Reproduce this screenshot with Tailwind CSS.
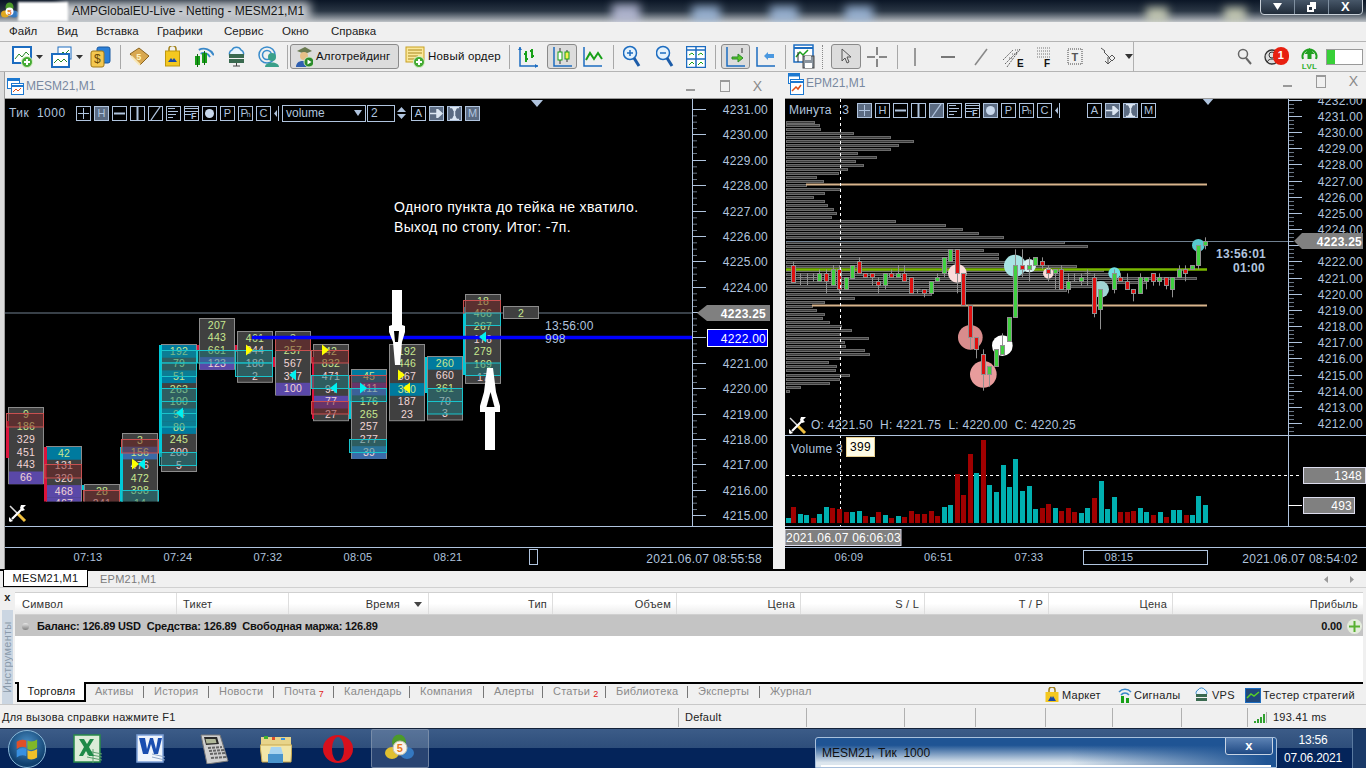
<!DOCTYPE html>
<html lang="en">

<head>
    <meta charset="UTF-8">
    <title>AMPGlobalEU-Live - Netting - MESM21,M1</title>
    <script src="https://cdn.jsdelivr.net/npm/@tailwindcss/browser@4"></script>
</head>

<body class="w-[1366px] h-[768px] overflow-hidden flex flex-col bg-[#f0f0f0] text-[11px] tracking-[0.25px] text-black font-['Liberation_Sans',sans-serif]">

    <!-- Title bar -->
    <div class="relative h-[22px] shrink-0 overflow-hidden bg-gradient-to-b from-[#0b1626] via-[#2a3644] to-[#c0c4c8]">
        <div class="absolute left-[60px] top-[2px] w-[250px] h-[20px] bg-[#c8ccd0] blur-[5px]"></div>
        <div class="absolute left-[612px] top-[4px] w-[28px] h-[18px] bg-[#c8cce8]/80 blur-[5px]"></div>
        <div class="absolute left-[692px] top-[6px] w-[28px] h-[16px] bg-[#a8c4e8]/80 blur-[5px]"></div>
        <div class="absolute left-[770px] top-[6px] w-[28px] h-[16px] bg-[#a8c4e8]/80 blur-[5px]"></div>
        <div class="absolute left-[845px] top-[6px] w-[28px] h-[16px] bg-[#a8c4e8]/80 blur-[5px]"></div>
        <div class="absolute left-[1146px] top-[7px] w-[22px] h-[15px] bg-[#d8dcc0]/80 blur-[4px]"></div>
        <div class="absolute left-[1224px] top-[7px] w-[22px] h-[15px] bg-[#d8dcc0]/80 blur-[4px]"></div>
        <div class="relative flex items-center h-full pl-[1px]">
            <svg width="17" height="18" viewBox="0 0 17 18">
                <ellipse cx="8.500" cy="5" rx="4" ry="4.500" fill="#4c9a2a" />
                <ellipse cx="4" cy="12" rx="4" ry="3.500" fill="#e0a820" />
                <ellipse cx="13" cy="12" rx="4" ry="3.500" fill="#3478c0" />
                <circle cx="8.500" cy="9.500" r="4" fill="#fff" />
                <text x="8.500" y="12.500" font-size="8" font-weight="700" fill="#e87818" text-anchor="middle">5</text>
            </svg>
            <div class="w-[50px] h-[19px] bg-white blur-[1px]"></div>
            <span class="ml-[4px] text-[12px] tracking-[0px] text-[#161616]">AMPGlobalEU-Live - Netting - MESM21,M1</span>
        </div>
        <div class="absolute left-[1260px] top-[-2px] w-[103px] h-[17px] rounded-b-[4px] border border-[#c8d0d8] bg-gradient-to-b from-[#4a5a6c] to-[#202c3a] flex text-white">
            <span class="w-[34px] flex items-center justify-center border-r border-[#8090a0]"><svg width="9" height="7"><path d="M0 0h9L4.500 7z" fill="#fff" /></svg></span>
            <span class="w-[34px] flex items-center justify-center border-r border-[#8090a0]"><svg width="9" height="10"><path d="M3 0h6v7H7v3H0V3h3z" fill="#fff" /><path d="M2 5h3v3H2z" fill="#2a3644" /></svg></span>
            <span class="flex-1 flex items-center justify-center text-[13px] font-bold leading-none">X</span>
        </div>
    </div>

    <!-- Menu -->
    <div class="h-[19px] shrink-0 flex items-center pl-[9px] text-[11.500px] tracking-[0px] text-[#222]">
        <span class="w-[48px]">Файл</span><span class="w-[39px]">Вид</span><span class="w-[61px]">Вставка</span><span class="w-[67px]">Графики</span><span class="w-[58px]">Сервис</span><span class="w-[49px]">Окно</span><span>Справка</span>
    </div>

    <!-- Toolbar -->
    <div id="toolbar" class="relative h-[31px] shrink-0 border-y border-[#b4b4b4] bg-[#f0f0f0] flex items-center">
        <div class="ml-[12px] w-[21px] h-[22px]"><svg width="21" height="22"><rect x="1" y="1" width="18" height="16" fill="#fff" stroke="#1c6cc0" stroke-width="2" /><path d="M3 13l4-5 3 3 4-5 3 3" fill="none" stroke="#2a8a2a" /><circle cx="15" cy="16" r="5.500" fill="#44aa33" stroke="#e0f0d0" /><path d="M12 16h6M15 13v6" stroke="#fff" stroke-width="2" /></svg></div>
        <svg class="ml-[3px]" width="7" height="4"><path d="M0 0h7L3.500 4z" fill="#333" /></svg>
        <div class="ml-[8px] w-[22px] h-[22px]"><svg width="22" height="22"><rect x="7" y="1" width="13" height="12" fill="#fff" stroke="#1c6cc0" /><path d="M9 9l3-3 2 2 4-4" fill="none" stroke="#2a8a2a" /><rect x="1" y="8" width="17" height="13" fill="#fff" stroke="#1c6cc0" stroke-width="2" /><path d="M3 17l4-4 3 3 3-3 3 3" fill="none" stroke="#2a8a2a" /></svg></div>
        <svg class="ml-[3px]" width="7" height="4"><path d="M0 0h7L3.500 4z" fill="#333" /></svg>
        <div class="ml-[7px] w-[21px] h-[22px]"><svg width="21" height="22"><rect x="7" y="1" width="13" height="16" rx="2" fill="#2c80d8" stroke="#1858a0" /><rect x="1" y="5" width="13" height="16" rx="2" fill="#f4c850" stroke="#a07818" /><text x="7.500" y="17" font-size="12" fill="#6a4a08" text-anchor="middle">$</text></svg></div>
        <div class="ml-[9px] w-[1px] h-[24px] bg-[#a8a8a8]"></div>
        <div class="ml-[8px] w-[21px] h-[20px]"><svg width="21" height="20"><path d="M1 7l9-6 10 8-9 9z" fill="#d8a850" stroke="#8a6420" /><path d="M2 9l9 9" stroke="#f8e8b8" stroke-width="2" /><text x="10" y="13" font-size="9" font-weight="700" fill="#fff4c0" text-anchor="middle">5</text></svg></div>
        <div class="ml-[15px] w-[14px] h-[22px]"><svg width="15" height="21"><path d="M4 6V3a3 3 0 0 1 7 0v3" fill="none" stroke="#a08018" stroke-width="1.500" /><rect x="0.500" y="5" width="14" height="15" fill="#f4c820" stroke="#c09810" /><path d="M3 16l3-4 1.500 2L9 12l3 4z" fill="#1848a8" /></svg></div>
        <div class="ml-[15px] w-[20px] h-[22px]"><svg width="20" height="21"><path d="M6 9a7 7 0 0 1 10 0M3 6a11 11 0 0 1 16 0" transform="rotate(20 10 10)" fill="none" stroke="#3a88c8" stroke-width="1.800" /><rect x="1" y="10" width="5" height="9" fill="#18a018" /><rect x="8" y="7" width="5" height="10" fill="#18a018" /><path d="M3.500 8v13M10.500 5v14" stroke="#106810" /></svg></div>
        <div class="ml-[12px] w-[20px] h-[22px]"><svg width="21" height="21"><path d="M5 11a4 4 0 0 1 1-7 5 5 0 0 1 9 0 4 4 0 0 1 1 7z" fill="#e8f4fc" stroke="#3a8ccc" stroke-width="1.500" /><rect x="3" y="8" width="15" height="4" fill="#3a6a50" /><rect x="3" y="13" width="15" height="4" fill="#3a6a50" /><path d="M10.500 17v3M7 20h7" stroke="#444" /></svg></div>
        <div class="ml-[12px] w-[20px] h-[22px]"><svg width="21" height="21"><circle cx="9" cy="9" r="8" fill="none" stroke="#3a8ccc" stroke-width="1.500" /><circle cx="9" cy="9" r="4.500" fill="none" stroke="#3a8ccc" stroke-width="1.500" /><circle cx="14" cy="11" r="4" fill="#3aa08a" /><path d="M7 21c0-6 14-6 14 0z" fill="#3aa08a" /></svg></div>
        <div class="ml-[9px] w-[1px] h-[24px] bg-[#a8a8a8]"></div>
        <div class="ml-[2px] w-[109px] h-[25px] rounded-[3px] border border-[#8a8a8a] bg-[#dcdcdc] flex items-center pl-[4px] gap-[3px]">
            <svg width="18" height="21"><path d="M2 5l8-4 7 4-7 3z" fill="#6a7a50" /><circle cx="9" cy="10" r="4" fill="#e8c088" /><path d="M1 21c0-8 12-8 14 0z" fill="#3060b0" /><circle cx="14" cy="16" r="5" fill="#2a8a2a" stroke="#d0e8c0" /><path d="M12.500 13.500v5l4-2.500z" fill="#fff" /></svg>
            <span class="text-[11.500px] tracking-[0.15px] text-[#111] whitespace-nowrap">Алготрейдинг</span>
        </div>
        <div class="ml-[6px] w-[20px] h-[22px]"><svg width="21" height="22"><rect x="1" y="1" width="18" height="15" fill="#fbe89a" stroke="#c8a020" /><path d="M3 4h14M3 7h14M3 10h10M3 13h8" stroke="#a88820" /><circle cx="14" cy="16" r="5.500" fill="#44aa33" stroke="#e0f0d0" /><path d="M11 16h6M14 13v6" stroke="#fff" stroke-width="2" /></svg></div>
        <span class="ml-[3px] w-[72px] text-[11.500px] tracking-[0.2px] text-[#111] whitespace-nowrap">Новый ордер</span>
        <div class="ml-[9px] w-[1px] h-[24px] bg-[#a8a8a8]"></div>
        <div class="ml-[8px] w-[21px] h-[22px]"><svg width="21" height="22"><path d="M2 1v19h18" fill="none" stroke="#1c6cc0" stroke-width="1.500" /><path d="M0 4l2-3 2 3M17 18l3 2-3 2" fill="#1c6cc0" /><path d="M8 5v11M6 8h2M8 13h2M14 3v9M12 5h2M14 10h2" stroke="#18a018" stroke-width="2" /></svg></div>
        <div class="ml-[8px] w-[30px] h-[25px] rounded-[3px] border border-[#8a8a8a] bg-[#dcdcdc] flex items-center justify-center"><svg width="21" height="22"><path d="M2 1v19h18" fill="none" stroke="#1c6cc0" stroke-width="1.500" /><path d="M8 2v16M15 4v12" stroke="#333" /><rect x="6" y="6" width="4" height="8" fill="#fff" stroke="#18a018" /><rect x="13" y="6" width="4" height="7" fill="#f6ee50" stroke="#18a018" /></svg></div>
        <div class="ml-[5px] w-[21px] h-[22px]"><svg width="21" height="22"><path d="M2 1v19h18" fill="none" stroke="#1c6cc0" stroke-width="1.500" /><path d="M4 14l4-7 4 6 4-6 4 6" fill="none" stroke="#18a018" stroke-width="2" /></svg></div>
        <div class="ml-[10px] w-[1px] h-[24px] bg-[#a8a8a8]"></div>
        <div class="ml-[9px] w-[18px] h-[23px]"><svg width="18" height="23"><circle cx="7" cy="8" r="6.500" fill="#e4f2fc" stroke="#1c6cc0" stroke-width="1.500" /><path d="M4 8h6M7 5v6" stroke="#1c6cc0" stroke-width="1.500" /><path d="M11 13l5 8" stroke="#1c5ca8" stroke-width="3" /></svg></div>
        <div class="ml-[15px] w-[18px] h-[23px]"><svg width="18" height="23"><circle cx="7" cy="8" r="6.500" fill="#e4f2fc" stroke="#1c6cc0" stroke-width="1.500" /><path d="M4 8h6" stroke="#1c6cc0" stroke-width="1.500" /><path d="M11 13l5 8" stroke="#1c5ca8" stroke-width="3" /></svg></div>
        <div class="ml-[12px] w-[20px] h-[22px]"><svg width="20" height="22"><rect x="0.500" y="0.500" width="19" height="21" fill="#fff" stroke="#1c6cc0" stroke-width="1.500" /><path d="M0 4h20M0 13h20M10 0v22" stroke="#1c6cc0" stroke-width="1.500" /><path d="M3 9l3-2 2 2M12 9l3-2 2 2M3 19l3-3 2 2M12 19l3-3 2 2" fill="none" stroke="#18a018" /></svg></div>
        <div class="ml-[9px] w-[1px] h-[24px] bg-[#a8a8a8]"></div>
        <div class="ml-[5px] w-[29px] h-[25px] rounded-[3px] border border-[#8a8a8a] bg-[#dcdcdc] flex items-center justify-center"><svg width="21" height="22"><path d="M2 1v19h18" fill="none" stroke="#1c6cc0" stroke-width="1.500" /><path d="M7 11h6V8l5 4-5 4v-3H7z" fill="#58c828" stroke="#2a8a2a" /><path d="M17 2v5" stroke="#333" /></svg></div>
        <div class="ml-[5px] w-[20px] h-[22px]"><svg width="21" height="22"><path d="M2 1v19h18" fill="none" stroke="#1c6cc0" stroke-width="1.500" /><path d="M13 8h6v4h-6v2l-4-4 4-4z" fill="#4a98e0" /></svg></div>
        <div class="ml-[10px] w-[1px] h-[24px] bg-[#a8a8a8]"></div>
        <div class="ml-[7px] w-[22px] h-[26px]"><svg width="22" height="25"><rect x="1" y="1" width="19" height="17" fill="#fff" stroke="#1c6cc0" stroke-width="1.500" /><path d="M1 4h19" stroke="#1c6cc0" stroke-width="2" /><path d="M3 13l4-5 3 3 5-5" fill="none" stroke="#18a018" stroke-width="1.500" /><path d="M5 8v10" stroke="#333" /><rect x="10" y="12" width="11" height="12" fill="#8a949e" stroke="#444" /><rect x="12" y="12" width="6" height="4" fill="#e8e8e8" /><rect x="12" y="19" width="7" height="5" fill="#fff" /></svg></div>
        <div class="ml-[7px] w-[1px] h-[24px] border-l border-dotted border-[#888]"></div>
        <div class="ml-[8px] w-[30px] h-[25px] rounded-[3px] border border-[#8a8a8a] bg-[#dcdcdc] flex items-center justify-center"><svg width="12" height="17"><path d="M2 1v12l3-3 2 5 2-1-2-5h4z" fill="#ddd" stroke="#555" /></svg></div>
        <div class="ml-[6px] w-[20px] h-[20px]"><svg width="20" height="20"><path d="M10 0v8M10 12v8M0 10h8M12 10h8" stroke="#666" stroke-width="1.500" /></svg></div>
        <div class="ml-[10px] w-[1px] h-[24px] bg-[#a8a8a8]"></div>
        <div class="ml-[16px] w-[2px] h-[18px] bg-[#999]"></div>
        <div class="ml-[25px] w-[14px] h-[2px] bg-[#777]"></div>
        <div class="ml-[19px] w-[14px] h-[18px]"><svg width="14" height="18"><path d="M1 17 13 1" stroke="#888" stroke-width="1.500" /></svg></div>
        <div class="ml-[15px] w-[23px] h-[22px]"><svg width="23" height="22"><path d="M0 14 10 4M2 18 14 6M4 21 17 3" stroke="#666" stroke-dasharray="2 1" /><path d="M12 4h6M9 8h5M6 12h4" stroke="#666" stroke-dasharray="1 1" /><text x="14" y="21" font-size="10" font-weight="700" fill="#111">E</text></svg></div>
        <div class="ml-[10px] w-[17px] h-[22px]"><svg width="17" height="22"><path d="M1 2h14M1 5h14M1 8h14M1 11h14" stroke="#777" stroke-dasharray="1 1" /><text x="8" y="21" font-size="10" font-weight="700" fill="#111">F</text></svg></div>
        <div class="ml-[14px] w-[17px] h-[20px]"><svg width="17" height="20"><rect x="1" y="2" width="14" height="15" fill="none" stroke="#444" stroke-dasharray="1 1" /><text x="8" y="14" font-size="11" font-weight="700" fill="#555" text-anchor="middle">T</text></svg></div>
        <div class="ml-[15px] w-[18px] h-[20px]"><svg width="18" height="20"><path d="M2 1l4 3-1 1 5 5M9 10v7M6 14l3 3 3-3M13 8l3 3-3 3-3-3z" fill="none" stroke="#555" /></svg></div>
        <svg class="ml-[8px]" width="8" height="5"><path d="M0 0h8L4 5z" fill="#333" /></svg>
        <div class="w-[1px] h-[30px] bg-[#b0b0b0]"></div>
        <div class="ml-[103px] w-[15px] h-[17px]"><svg width="15" height="17"><circle cx="6" cy="6" r="4.500" fill="none" stroke="#666" stroke-width="1.500" /><path d="M9 10l5 6" stroke="#666" stroke-width="2" /></svg></div>
        <div class="relative ml-[12px] w-[27px] h-[22px]"><svg width="27" height="22"><circle cx="8" cy="11" r="7" fill="#ddd" stroke="#333" stroke-width="1.300" /><circle cx="8" cy="9" r="3" fill="none" stroke="#333" /><path d="M3 16c2-4 8-4 10 0" fill="none" stroke="#333" /></svg><span class="absolute left-[9px] top-[1px] w-[16px] h-[18px] rounded-full bg-[#e82010] text-white text-[11px] font-bold flex items-center justify-center">1</span></div>
        <div class="ml-[9px] w-[19px] h-[26px]"><svg width="19" height="26"><path d="M3 15a7 7 0 1 1 13 0" fill="none" stroke="#20a020" stroke-width="2" /><path d="M9.500 4l5 6h-3v5h-4v-5h-3z" fill="#20a020" /><text x="9.500" y="25" font-size="8" font-weight="700" fill="#30b030" text-anchor="middle">LVL</text></svg></div>
        <div class="ml-[7px] w-[37px] h-[16px] border border-[#999] bg-white"><div class="w-[8px] h-full bg-[#38d038]"></div></div>
    </div>

    <!-- MDI area -->
    <div class="relative h-[497px] shrink-0 flex bg-[#f0f0f0]">
        <div class="w-[5px] shrink-0 bg-[#dcdcdc] border-r border-[#a0a0a0]"></div>
        <div class="w-[768px] shrink-0 flex flex-col">
            <div class="h-[26px] shrink-0 flex items-center pl-[2px] text-[12px] tracking-[0px] text-[#7888a0] pt-[2px]">
                <svg width="17" height="17"><rect x="0.500" y="0.500" width="12" height="10" fill="#fff" stroke="#1c78d0" /><path d="M0 2h12" stroke="#1c78d0" stroke-width="2" /><rect x="4.500" y="5.500" width="12" height="11" fill="#fff" stroke="#1c78d0" /><path d="M5 8h11" stroke="#1c78d0" stroke-width="2" /><path d="M6 14l3-3 2 2 3-3" fill="none" stroke="#e05018" /></svg>
                <span class="ml-[2px]">MESM21,M1</span>
                <div class="ml-auto flex items-center text-[#8a8a8a]">
                    <span class="w-[9px] h-[2px] bg-[#999] mt-[7px]"></span>
                    <span class="ml-[25px] w-[10px] h-[12px] border border-[#999] border-t-2"></span>
                    <span class="ml-[23px] mr-[11px] text-[14px] leading-none">X</span>
                </div>
            </div>
            <div class="relative flex-1 bg-black border-t border-[#9a9a9a] overflow-hidden">
                <svg id="leftChart" class="absolute left-0 top-0" width="768" height="467" viewBox="5 99 768 467"></svg>
                <div class="absolute left-[4px] top-[5px] flex items-center text-[#b0c4de] text-[12px] tracking-[0.5px]">
                    <span class="w-[67px] whitespace-pre">Тик  1000</span>
                    <div id="leftTools" class="flex gap-[3px] items-center tracking-[0px]"></div>
                </div>
            </div>
        </div>
        <div class="w-[12px] shrink-0"></div>
        <div class="flex-1 flex flex-col min-w-0">
            <div class="h-[26px] shrink-0 flex items-start pl-[3px] text-[12px] tracking-[0px] text-[#7888a0]">
                <svg class="mt-[1px]" width="17" height="23"><rect x="0.500" y="0.500" width="11" height="10" fill="#fff" stroke="#1c78d0" /><path d="M0 2h12" stroke="#1c78d0" stroke-width="3" /><rect x="2.500" y="6.500" width="13" height="15" fill="#fff" stroke="#1c78d0" /><path d="M3 9h12" stroke="#1c78d0" stroke-width="2" /><path d="M4 18l4-4 2 2 3-4" fill="none" stroke="#e05018" stroke-width="1.500" /></svg>
                <span class="ml-[1px] mt-[2px]">EPM21,M1</span>
                <div class="ml-auto flex items-center text-[#8a8a8a] mt-[2px]">
                    <span class="w-[9px] h-[2px] bg-[#999] mt-[9px]"></span>
                    <span class="ml-[24px] w-[10px] h-[13px] border border-[#999] border-t-2"></span>
                    <span class="ml-[23px] mr-[8px] text-[14px] leading-none">X</span>
                </div>
            </div>
            <div class="relative flex-1 bg-black border-t border-[#9a9a9a] overflow-hidden">
                <svg id="rightChart" class="absolute left-0 top-0" width="581" height="467" viewBox="785 99 581 467"></svg>
                <div class="absolute left-[4px] top-[2px] flex items-center text-[#b0c4de] text-[12px] tracking-[0.2px]">
                    <span class="w-[68px]">Минута&nbsp;&nbsp;&nbsp;3</span>
                    <div id="rightTools" class="flex gap-[3px] items-center tracking-[0px]"></div>
                </div>
                <div class="absolute left-[61px] top-[338px] w-[29px] h-[20px] border border-[#e8d090] bg-[#fffde8] text-black text-[12px] flex items-center justify-center">399</div>
            </div>
        </div>
    </div>

    <!-- Chart tabs -->
    <div class="h-[18px] shrink-0 flex items-end border-t-2 border-black pl-[3px]">
        <div class="w-[85px] h-[17px] bg-white border-x border-b border-black text-center leading-[16px] text-[#111]">MESM21,M1</div>
        <span class="ml-[12px] text-[#7a7a7a] leading-[16px]">EPM21,M1</span>
        <svg class="ml-auto mr-[12px] mb-[3px]" width="30" height="9"><path d="M4 1v7L0 4.500zM26 1v7l4-3.500z" fill="#999" /></svg>
    </div>

    <!-- Toolbox -->
    <div class="h-[117px] shrink-0 flex border-t border-[#d0d0d0] pt-[4px]">
        <div class="relative w-[15px] shrink-0 flex flex-col items-center">
            <span class="font-bold text-[11px] leading-[11px] text-[#222]">x</span>
            <div class="mt-[7px] w-[11px] h-[95px] bg-[#cbd6e2] flex items-center justify-center overflow-hidden">
                <span class="-rotate-90 whitespace-nowrap text-[#8a9aaa] text-[11px]">Инструменты</span>
            </div>
        </div>
        <div class="flex-1 flex flex-col min-w-0 mr-[3px]">
            <div class="h-[23px] shrink-0 flex bg-gradient-to-b from-white via-white to-[#ececec] border-y border-[#d0d0d0] text-[#333]">
                <span class="w-[162px] pl-[7px] pt-[1px] border-r border-[#dedede] flex items-center">Символ</span>
                <span class="w-[112px] pl-[6px] pt-[1px] border-r border-[#dedede] flex items-center">Тикет</span>
                <span class="w-[140px] pr-[6px] pt-[1px] border-r border-[#dedede] flex items-center justify-end">Время<svg class="ml-[14px]" width="8" height="5"><path d="M0 0h8L4 5z" fill="#444" /></svg></span>
                <span class="w-[124px] pr-[5px] pt-[1px] border-r border-[#dedede] flex items-center justify-end">Тип</span>
                <span class="w-[124px] pr-[5px] pt-[1px] border-r border-[#dedede] flex items-center justify-end">Объем</span>
                <span class="w-[124px] pr-[5px] pt-[1px] border-r border-[#dedede] flex items-center justify-end">Цена</span>
                <span class="w-[124px] pr-[5px] pt-[1px] border-r border-[#dedede] flex items-center justify-end">S / L</span>
                <span class="w-[124px] pr-[5px] pt-[1px] border-r border-[#dedede] flex items-center justify-end">T / P</span>
                <span class="w-[124px] pr-[5px] pt-[1px] border-r border-[#dedede] flex items-center justify-end">Цена</span>
                <span class="flex-1 pr-[5px] pt-[1px] flex items-center justify-end">Прибыль</span>
            </div>
            <div class="h-[21px] shrink-0 bg-[#c4c4c4] flex items-center pl-[7px] pt-[1px] font-bold tracking-[-0.15px] text-[#111]">
                <span class="w-[7px] h-[7px] rounded-full bg-gradient-to-b from-[#e8e8e8] to-[#808080]"></span>
                <span class="ml-[8px] whitespace-pre">Баланс: 126.89 USD  Средства: 126.89  Свободная маржа: 126.89</span>
                <span class="ml-auto">0.00</span>
                <span class="ml-[5px] mr-[1px] w-[15px] h-[15px] rounded-full bg-[#e4ecdc] flex items-center justify-center"><svg width="11" height="11"><path d="M5.500 0v11M0 5.500h11" stroke="#58b030" stroke-width="2" /></svg></span>
            </div>
            <div class="flex-1 bg-white border-b-2 border-black"></div>
            <div class="h-[20px] shrink-0 flex items-start text-[#8a8a8a] relative">
                <div class="w-[69px] h-[20px] -mt-[2px] bg-white border-x-2 border-b-2 border-black text-center text-[#111] leading-[19px] ml-[2px]">Торговля</div>
                <div id="bottomTabs" class="flex items-center h-[15px]"></div>
                <div class="absolute left-[1030px] top-[1px] flex items-center h-[20px] text-[#222]">
                    <svg width="14" height="16"><path d="M4 6V3a3 3 0 0 1 6 0v3" fill="none" stroke="#a08018" stroke-width="1.500" /><rect x="0.500" y="5" width="13" height="10" fill="#f4c820" /><path d="M3 14l3-5 1 2 1-2 3 5z" fill="#1848a8" /></svg>
                    <span class="ml-[3px] w-[41px]">Маркет</span>
                    <svg class="ml-[15px]" width="14" height="17"><path d="M3 8a5 5 0 0 1 8 0M1 5a8 8 0 0 1 12 0" fill="none" stroke="#3a88c8" stroke-width="1.500" /><rect x="3" y="9" width="3" height="7" fill="#18a018" /><rect x="8" y="11" width="3" height="5" fill="#18a018" /></svg>
                    <span class="ml-[2px] w-[46px]">Сигналы</span>
                    <svg class="ml-[13px]" width="17" height="16"><path d="M4 8a3 3 0 0 1 1-5 4 4 0 0 1 7 0 3 3 0 0 1 1 5z" fill="#e8f4fc" stroke="#3a8ccc" /><rect x="3" y="7" width="11" height="3" fill="#3a6a50" /><rect x="3" y="11" width="11" height="3" fill="#3a6a50" /></svg>
                    <span class="ml-[2px] w-[20px]">VPS</span>
                    <svg class="ml-[13px]" width="16" height="15"><rect x="0.500" y="0.500" width="15" height="14" fill="#20487a" stroke="#1c6cc0" /><path d="M2 10l4-4 3 2 5-4" fill="none" stroke="#58d028" stroke-width="1.500" /></svg>
                    <span class="ml-[2px] whitespace-nowrap">Тестер стратегий</span>
                </div>
            </div>
        </div>
    </div>

    <!-- Status bar -->
    <div class="h-[24px] shrink-0 relative flex items-center border-t border-[#c8c8c8] pt-[1px]">
        <span class="ml-[2px] w-[676px] text-[#222]">Для вызова справки нажмите F1</span>
        <span class="w-[1px] h-[19px] bg-[#b0b0b0]"></span>
        <span class="ml-[6px] w-[121px] text-[#222]">Default</span>
        <span class="w-[1px] h-[19px] bg-[#b0b0b0]"></span>
        <span class="ml-[97px] w-[1px] h-[19px] bg-[#b0b0b0]"></span>
        <span class="ml-[70px] w-[1px] h-[19px] bg-[#b0b0b0]"></span>
        <span class="ml-[69px] w-[1px] h-[19px] bg-[#b0b0b0]"></span>
        <span class="ml-[66px] w-[1px] h-[19px] bg-[#b0b0b0]"></span>
        <span class="ml-[68px] w-[1px] h-[19px] bg-[#b0b0b0]"></span>
        <span class="ml-[65px] w-[1px] h-[19px] bg-[#b0b0b0]"></span>
        <svg class="ml-[6px]" width="13" height="11"><path d="M0 9h2v2H0zM3 7h2v4H3zM6 5h2v6H6zM9 2h2v9H9z" fill="#30a030" /><path d="M12 0h1v11h-1z" fill="#aaa" /></svg>
        <span class="ml-[6px] text-[#222]">193.41 ms</span>
    </div>

    <!-- Taskbar -->
    <div class="relative flex-1 flex items-center bg-[linear-gradient(#3c5c88_0%,#2d4d7a_50%,#04245a_50%,#04245a_100%)] border-t border-[#15233a]">
        <div class="ml-[8px] w-[38px] h-[38px] rounded-full bg-[radial-gradient(circle_at_50%_35%,#4a90c8,#10406e_70%)] border border-[#8ab8d8] flex items-center justify-center">
            <svg width="25" height="24" viewBox="0 0 20 20"><path d="M1 4q4-3 8-1v6q-4-2-8 1z" fill="#e05028" /><path d="M10 3q4 2 8-1v7q-4 3-8 1z" fill="#80b828" /><path d="M1 11q4-3 8-1v6q-4-2-8 1z" fill="#3890e0" /><path d="M10 11q4 2 8-1v7q-4 3-8 1z" fill="#f0c028" /></svg>
        </div>
        <div class="ml-[27px] w-[30px] h-[30px]"><svg width="30" height="30"><rect x="1" y="1" width="26" height="27" fill="#dcecd8" stroke="#2a8a4a" stroke-width="1.500" /><path d="M14 17l15 3M14 20l15 3M14 23l15 3M20 15v14" stroke="#60a070" /><path d="M6 5h5l3 5 3-5h4l-5 8 5 9h-5l-3-5-3 5H6l5-9z" fill="#1f8a48" /></svg></div>
        <div class="ml-[33px] w-[30px] h-[30px]"><svg width="30" height="30"><rect x="1" y="1" width="26" height="27" fill="#eef4fc" stroke="#7ca0d8" stroke-width="1.500" /><path d="M16 20l13 3M16 23l13 3" stroke="#90a8c8" /><path d="M3 4h6l2 11 3-11h3l3 11 2-11h4l-4 16h-4l-3-10-3 10H7z" fill="#1a4eb0" /></svg></div>
        <div class="ml-[34px] w-[29px] h-[30px]"><svg width="29" height="30"><path d="M1 1h19l8 26-21 3z" fill="#cfcfcf" stroke="#777" /><path d="M4 3h13l2 7-13 1z" fill="#2a2a2a" /><path d="M5.500 5h10l1 4-10 .5z" fill="#b0b89a" /><path d="M8 14l14-1M9 17l15-1M10 20l15-1M11 24l15-1" stroke="#666" stroke-width="2" stroke-dasharray="3 1" /></svg></div>
        <div class="ml-[31px] w-[32px] h-[30px]"><svg width="32" height="30"><path d="M1 3h30v9H1z" fill="#e8d48a" /><rect x="4" y="2" width="4" height="3" fill="#40b030" /><rect x="12" y="3" width="3" height="3" fill="#e05028" /><rect x="21" y="4" width="4" height="2" fill="#3890e0" /><path d="M0 11h32l-1 17H2z" fill="#f2e6a8" stroke="#c8a850" /><path d="M9 20h14l-2-7H11z" fill="#a8d4f0" /><rect x="8" y="20" width="15" height="9" fill="#4a94cc" /></svg></div>
        <div class="ml-[31px] w-[30px] h-[30px] flex items-center"><svg width="30" height="30"><path fill-rule="evenodd" d="M0 15a15 14 0 1 0 30 0a15 14 0 1 0-30 0z M9 15a6 12 0 1 0 12 0a6 12 0 1 0-12 0z" fill="#d8101c" /></svg></div>
        <div class="ml-[18px] w-[58px] h-[39px] rounded-[2px] bg-white/15 border border-[#8898b0]/70 flex items-center justify-center">
            <svg width="30" height="30"><ellipse cx="14" cy="8" rx="7" ry="7.500" fill="#4c9a2a" /><ellipse cx="7" cy="19" rx="7" ry="6" fill="#e0c030" /><ellipse cx="22" cy="19" rx="7" ry="6" fill="#3478c0" /><circle cx="15" cy="14" r="7" fill="#f8f4e8" stroke="#c0c0b0" /><text x="15" y="18" font-size="11" font-weight="700" fill="#e87818" text-anchor="middle">5</text></svg>
        </div>
        <!-- Window preview -->
        <div class="absolute left-[815px] top-[8px] w-[462px] h-[31px] rounded-t-[3px] border border-[#a8c0dc] bg-[linear-gradient(to_right,transparent_55%,#1f5494_98%),linear-gradient(to_bottom,#1f5494_25%,#dce6ee_85%)] overflow-hidden">
            <span class="absolute left-[6px] top-[6px] text-[12px] tracking-[0px] text-[#101010] whitespace-pre">MESM21, Тик  1000</span>
            <span class="absolute left-[5px] right-[5px] top-[27px] h-[4px] bg-white"></span>
            <span class="absolute left-[409px] top-[-1px] w-[48px] h-[18px] rounded-b-[3px] border border-[#c8d4e4] bg-gradient-to-b from-[#5c82b4] to-[#1f4a84] text-white font-bold text-[13px] text-center leading-[15px]">x</span>
        </div>
        <div class="absolute left-[1278px] top-0 w-[70px] h-full flex flex-col items-center justify-center text-white text-[12px] tracking-[-0.2px] gap-[6px] leading-none">
            <span>13:56</span>
            <span>07.06.2021</span>
        </div>
        <div class="absolute right-0 top-0 w-[14px] h-full bg-[#1a3a68] border-l border-[#5a7aa0]"></div>
    </div>

    <script>
        // chart buttons: [content, filled]
        const ICONS = {
            plus: '<svg width="11" height="11"><path d="M5.500 0v11M0 5.500h11" stroke="#b0c4de" /></svg>',
            hline: '<svg width="11" height="11"><path d="M0 5.500h11" stroke="#b0c4de" stroke-width="2" /></svg>',
            vline: '<svg width="11" height="13"><path d="M5.500 0v13" stroke="#b0c4de" stroke-width="2" /></svg>',
            trend: '<svg width="11" height="13"><path d="M1 13 10 0" stroke="#b0c4de" stroke-width="1.300" /></svg>',
            lines: '<svg width="13" height="13"><path d="M1 1.500h7M1 4.500h10M1 7.500h8M1 10.500h5" stroke="#b0c4de" /></svg>',
            fr: '<svg width="13" height="13"><path d="M0 1.500h13M0 4.500h13M0 7.500h6" stroke="#b0c4de" /><text x="6" y="12" font-size="9" font-weight="700" fill="#b0c4de">F</text></svg>',
            dot: '<span class="w-[9px] h-[9px] rounded-full bg-[#c8d8ec]"></span>',
            arrow: '<svg width="13" height="9"><path d="M0 4.500h8M7 0l5 4.500L7 9z" stroke="#dce6f2" fill="#dce6f2" stroke-width="1.500" /></svg>',
            ibeam: '<svg width="11" height="13"><path d="M1 .5h9M1 12.500h9M5.500 1v11" stroke="#dce6f2" stroke-width="1.500" /><path d="M3 1h5L6.500 4h-2zM3 12h5L6.500 9h-2z" fill="#dce6f2" /></svg>',
            rh: 'P<span class="text-[7px] -ml-[1px] mt-[3px]">h</span>'
        };
        function chartButton(content, filled) {
            const bg = filled ? 'bg-[#5b6b82]' : '';
            return `<span class="w-[15px] h-[15px] shrink-0 border border-[#b0c4de] flex items-center justify-center text-[11px] leading-none ${bg}">${content}</span>`;
        }
        const narrow = '<span class="w-[5px] h-[15px] shrink-0 flex items-center"><svg width="5" height="15"><path d="M0 7.500 3 4v7z" fill="#b0c4de" /><path d="M4.500 0v15" stroke="#b0c4de" /></svg></span>';

        document.getElementById('leftTools').innerHTML = [
            [ICONS.plus], ['H', 1], [ICONS.hline], [ICONS.vline], [ICONS.trend], [ICONS.lines], [ICONS.fr], [ICONS.dot], ['P'], [ICONS.rh], ['C']
        ].map(b => chartButton(b[0], b[1])).join('') + narrow
            + '<span class="w-[84px] h-[17px] border border-[#b0c4de] flex items-center justify-between px-[3px] text-[12px]">volume<svg width="8" height="6"><path d="M0 0h8L4 6z" fill="#b0c4de" /></svg></span>'
            + '<span class="-ml-[2px] w-[28px] h-[17px] border border-[#b0c4de] px-[3px] text-[12px] leading-[15px]">2</span>'
            + '<span class="-ml-[3px] w-[13px] h-[17px] flex flex-col items-center justify-center gap-[2px]"><svg width="9" height="5"><path d="M0 5h9L4.500 0z" fill="#b0c4de" /></svg><svg width="9" height="5"><path d="M0 0h9L4.500 5z" fill="#b0c4de" /></svg></span>'
            + [['A'], [ICONS.arrow, 1], [ICONS.ibeam, 1], ['M', 1]].map(b => chartButton(b[0], b[1])).join('');

        document.getElementById('rightTools').innerHTML = [
            [ICONS.plus, 1], ['H'], [ICONS.hline], [ICONS.vline], [ICONS.trend, 1], [ICONS.lines], [ICONS.fr], [ICONS.dot, 1], ['P'], [ICONS.rh], ['C']
        ].map(b => chartButton(b[0], b[1])).join('') + narrow
            + '<span class="w-[21px] shrink-0"></span>'
            + [['A'], [ICONS.arrow, 1], [ICONS.ibeam, 1], ['M']].map(b => chartButton(b[0], b[1])).join('');

        // bottom tabs
        const tabs = [['Активы', 97], ['История', 156], ['Новости', 221], ['Почта', 286, '7'], ['Календарь', 346], ['Компания', 422], ['Алерты', 496], ['Статьи', 555, '2'], ['Библиотека', 618], ['Эксперты', 700], ['Журнал', 772]];
        let tabsHtml = '', tabX = 88;
        tabs.forEach((t, i) => {
            const nextX = tabs[i + 1] ? tabs[i + 1][1] : t[1] + 44;
            tabsHtml += `<span class="flex items-center whitespace-nowrap" style="margin-left:${t[1] - tabX}px;width:${nextX - t[1]}px"><span>${t[0]}</span>`
                + (t[2] ? `<span class="ml-[3px] mt-[6px] text-[9px] text-[#e02020]">${t[2]}</span>` : '')
                + (tabs[i + 1] ? '<span class="ml-auto mr-[10px] w-[1px] h-[12px] bg-[#777]"></span>' : '') + '</span>';
            tabX = nextX;
        });
        document.getElementById('bottomTabs').innerHTML = tabsHtml;

        // svg helpers, page coordinates
        const AXIS = '#b0c4de';
        const line = (x1, y1, x2, y2, c, w = 1, extra = '') => `<line x1="${x1}" y1="${y1}" x2="${x2}" y2="${y2}" stroke="${c}" stroke-width="${w}" ${extra}/>`;
        const rect = (x, y, w, h, fill, stroke = 'none', extra = '') => `<rect x="${x}" y="${y}" width="${w}" height="${h}" fill="${fill}" stroke="${stroke}" ${extra}/>`;
        const text = (x, y, s, c = AXIS, size = 12, anchor = 'start', extra = '') => `<text x="${x}" y="${y}" fill="${c}" font-size="${size}" text-anchor="${anchor}" font-family="Liberation Sans" ${extra}>${s}</text>`;
        const wrench = (x, y) => `<g transform="translate(${x} ${y})"><path d="M1 1 9 9" stroke="#ddd" stroke-width="1.500" /><path d="M9 9 16 16" stroke="#f0c040" stroke-width="3" /><path d="M14 3 3 14" stroke="#fff" stroke-width="2.200" /><path d="M12 0l5 0-3 3 2 2-3 1-2-3zM0 12l4 4-3 1-1-1z" fill="#fff" /></g>`;

        // left chart
        const CELL_H = 12.7;
        const BLUE = '#007a9e', PURPLE = '#5a48a8', BLUEP = '#3a6aa8';
        // [x, top, rows]; row = text, g for green text, fill
        const columns = [
            [8, 407, [['9', 1], ['186', 1], ['329'], ['451'], ['443'], ['66', 0, PURPLE]]],
            [46, 446, [['42', 1, BLUE], ['131'], ['320'], ['468', 0, PURPLE], ['467', 0, PURPLE]]],
            [84, 484, [['28', 1], ['241']]],
            [122, 433, [['3', 1], ['156', 1, BLUEP], ['476'], ['472', 1], ['398', 1], ['14', 1]]],
            [161, 344, [['192', 1, BLUE], ['79', 1], ['51', 1, BLUE], ['263', 1], ['100', 1], ['94', 1, BLUE], ['80', 1, BLUE], ['245', 1], ['200'], ['5']]],
            [199, 318, [['207', 1], ['443', 1], ['661', 1], ['123', 0, PURPLE]]],
            [237, 331, [['461', 1], ['344'], ['180'], ['2']]],
            [275, 331, [['3', 1], ['257', 1], ['567'], ['377'], ['100', 0, PURPLE]]],
            [313, 344, [['42', 1], ['832', 1], ['471'], ['94'], ['77', 0, PURPLE], ['27']]],
            [351, 369, [['45', 1, BLUE], ['411', 0, PURPLE], ['176', 1], ['265', 1], ['257'], ['277'], ['39', 0, BLUEP]]],
            [389, 344, [['192', 1], ['446', 1], ['367'], ['380', 1, BLUE], ['187'], ['23']]],
            [427, 356, [['260', 1, BLUE], ['660'], ['361', 1], ['70'], ['3']]],
            [465, 294, [['18', 1], ['466', 1], ['267', 1], ['176'], ['279', 1], ['169', 1], ['17']]]
        ];
        const RED = ['#7a1c1c', '#c85050'], TEAL = ['#188088', '#18c4cc'];
        // overlay boxes: x, y, w, h, kind
        const boxes = [
            [6, 413, 37, 13.500, RED], [44.500, 464, 36.500, 13.500, RED], [83, 490, 36, 13, RED], [121, 439, 37, 13.500, RED], [121, 490, 37, 13, TEAL],
            [161, 350, 35, 12.500, TEAL], [161, 362.500, 35, 13.500, TEAL], [161, 388, 35, 13, TEAL], [161, 401, 35, 12, TEAL], [161, 413, 35, 13.500, TEAL], [159, 452, 37, 13, TEAL],
            [197, 350, 38, 12.500, TEAL], [235, 350, 37, 12.500, TEAL], [235, 362.500, 37, 13.500, TEAL],
            [275, 337, 35, 13, RED], [311, 350, 37, 12.500, RED], [311, 375, 37, 13, TEAL], [311, 401, 37, 12.500, RED],
            [349, 375, 37, 13, RED], [349, 388, 37, 13, TEAL], [349, 439, 37, 13, TEAL],
            [427, 388, 35, 13, TEAL], [427, 401, 35, 12.500, TEAL],
            [463, 300, 37, 12.500, RED], [465, 312.500, 35, 12.500, TEAL], [465, 362.500, 35, 12.500, TEAL]
        ];
        const sideBars = [
            [6, 421, 3, 37, '#dc143c'], [44, 447, 3, 55, '#dc143c'], [82, 485, 2, 5, '#00c8d8'], [120, 447, 3, 55, '#00c8d8'], [159, 345, 3, 112, '#00c8d8'],
            [197, 345, 2, 5, '#dc143c'], [235, 345, 2, 7, '#dc143c'], [273, 357, 2, 10, '#dc143c'], [312, 357, 2, 62, '#dc143c'], [349, 388, 2, 31, '#00c8d8'],
            [425, 357, 2, 36, '#00c8d8'], [463, 307, 2, 68, '#00c8d8']
        ];
        // triangles: tip direction, x of base, y, colour
        const tri = (dir, x, y, c) => `<path d="M${x} ${y - 5.500}v11l${dir * 7}-5.500z" fill="${c}"/>`;
        const markers = [
            [1, 132, 464, '#ffff00'], [-1, 145, 464, '#00f0f0'], [-1, 183, 413, '#00f0f0'], [1, 246, 350, '#ffff00'], [-1, 296, 375, '#00f0f0'],
            [1, 322, 350, '#ffff00'], [-1, 337, 388, '#00f0f0'], [1, 360, 388, '#00f0f0'], [1, 398, 375, '#ffff00'], [-1, 410, 388, '#ffff00'], [-1, 486, 337, '#00f0f0']
        ];

        let left = '<defs><clipPath id="fpClip"><rect x="5" y="99" width="687" height="402.500"/></clipPath></defs><g clip-path="url(#fpClip)">';
        left += line(5, 313, 697, 313, '#708090');
        columns.forEach(([x, top, rows]) => {
            const h = rows.length * CELL_H;
            left += rect(x + 0.5, top + 0.5, 35, h, '#404040', '#8c8c8c');
            rows.forEach((r, i) => {
                if (r[2]) left += rect(x + 1, top + 1 + i * CELL_H, 34, CELL_H, r[2]);
            });
        });
        sideBars.forEach(([x, y, w, h, c]) => { left += rect(x, y, w, h, c); });
        columns.forEach(([x, top, rows]) => {
            rows.forEach((r, i) => {
                left += text(x + 18, top + 10.500 + i * CELL_H, r[0], r[1] ? '#c8e890' : '#f2d6d6', 10.500, 'middle');
            });
        });
        // boxes sit over the numbers, which show through them
        boxes.forEach(([x, y, w, h, k]) => { left += `<rect x="${x + 0.5}" y="${y + 0.5}" width="${w}" height="${h}" fill="${k[0]}" fill-opacity="0.45" stroke="${k[1]}"/>`; });
        left += line(252, 337.500, 692, 337.500, '#0000ff', 3.500);
        markers.forEach(m => { left += tri(...m); });
        left += '</g>';
        left += rect(503.500, 306.500, 35, 12, '#404040', '#8c8c8c') + text(521, 316.500, '2', '#c8e890', 10.500, 'middle');
        // hand drawn arrows
        left += '<path d="M392 290h10v35l3 1v6l-3 10-2 23h-5l-2-23-4-10v-6l3-1z" fill="#fff"/><path d="M394 331h5l-1 11h-3z" fill="#000"/>';
        left += '<path d="M485 450h10v-38h5v-6l-4-14-3-24h-6l-3 24-4 14v6h5z" fill="#fff"/><path d="M490.500 392l4 15h-8z" fill="#000"/>';
        const NOTE = 'letter-spacing="0.35"', WIDE = 'letter-spacing="0.3"';
        left += text(394, 212, 'Одного пункта до тейка не хватило.', '#fff', 14, 'start', NOTE) + text(394, 232, 'Выход по стопу. Итог: -7п.', '#fff', 14, 'start', NOTE);
        left += text(545, 330, '13:56:00', AXIS, 12) + text(545, 343, '998', AXIS, 12);
        left += line(692.500, 99, 692.500, 526, AXIS);
        for (let p = 4231; p >= 4215; p--) {
            const y = Math.round(109 + (4231 - p) * 25.375) + 0.5;
            left += line(692, y, 706, y, AXIS);
            if (p !== 4223 && p !== 4222) left += text(768, y + 4.500, p + '.00', AXIS, 12, 'end');
            if (p > 4215) for (let q = 1; q < 4; q++) { left += line(692, y + q * 6.34, 697, y + q * 6.34, AXIS, 1, 'stroke-opacity="0.6"'); }
        }
        left += line(5, 526.500, 773, 526.500, AXIS) + line(5, 547.500, 773, 547.500, AXIS);
        left += wrench(9, 505);
        left += '<path d="M697 313l10-8h63v16h-63z" fill="#808080"/>' + text(766, 317.500, '4223.25', '#fff', 12, 'end', 'font-weight="700"');
        left += rect(707.500, 329.500, 60, 17, '#0000ff', '#fff') + text(766, 342.500, '4222.00', '#fff', 12, 'end');
        left += '<path d="M531 100h12l-6 7z" fill="#b0c4de"/>';
        [['07:13', 88], ['07:24', 178], ['07:32', 268], ['08:05', 358], ['08:21', 448]].forEach(([s, x]) => { left += text(x, 561, s, AXIS, 11, 'middle'); });
        left += rect(529.500, 549.500, 8, 15, 'none', AXIS);
        left += text(762, 563, '2021.06.07 08:55:58', AXIS, 12, 'end', WIDE);
        document.getElementById('leftChart').innerHTML = left;

        // right chart: volume profile bars, y and length
        const profile = [[121, 28], [124, 33], [128, 34], [132, 67], [136, 104], [140, 127], [144, 112], [148, 104], [152, 71], [156, 90], [160, 69], [164, 77], [168, 61], [172, 52], [176, 30], [180, 37], [184, 20], [188, 54], [192, 38], [196, 27], [200, 38], [204, 41], [208, 47], [212, 50], [216, 45], [220, 109], [224, 159], [228, 176], [232, 192], [236, 217],
        [241, 278], [245, 301], [249, 197], [253, 212], [257, 212], [261, 240], [265, 290], [269, 317], [273, 325], [277, 410], [281, 360], [285, 320], [289, 280], [293, 145], [297, 68], [301, 38], [305, 26], [309, 30], [313, 38], [317, 36], [321, 43], [325, 55], [329, 65], [333, 53], [337, 82], [341, 58], [345, 59], [349, 78], [353, 83], [357, 53], [361, 42], [365, 50], [369, 49], [374, 63], [378, 53], [382, 43], [386, 14], [390, 3]];
        // zoom coordinates: x, body top, body bottom, wick top, wick bottom, colour (r, g, d for doji)
        const candles = [[40, 105, 155, 95, 155, 'r'], [60, 142, 142, 130, 165, 'd'], [80, 142, 142, 130, 165, 'd'], [100, 142, 142, 130, 155, 'd'], [118, 130, 155, 118, 155, 'g'], [139, 130, 155, 118, 190, 'r'], [160, 118, 167, 105, 167, 'g'], [178, 118, 178, 105, 190, 'r'], [198, 142, 178, 142, 178, 'g'], [217, 105, 143, 105, 143, 'g'], [238, 94, 130, 82, 130, 'r'], [256, 130, 142, 130, 142, 'r'], [277, 130, 142, 130, 167, 'r'], [295, 154, 167, 142, 190, 'r'], [316, 130, 167, 130, 178, 'g'], [334, 130, 142, 118, 142, 'r'], [355, 130, 142, 105, 142, 'g'], [373, 130, 155, 105, 155, 'r'], [394, 142, 190, 142, 190, 'r'], [412, 178, 178, 178, 190, 'd'], [433, 178, 190, 178, 202, 'r'], [454, 154, 190, 154, 190, 'g'], [472, 142, 154, 130, 154, 'g'], [493, 82, 130, 82, 142, 'g'], [511, 58, 94, 58, 94, 'g'], [532, 58, 130, 58, 190, 'r'], [550, 130, 226, 130, 226, 'r'], [571, 226, 322, 226, 358, 'r'], [589, 322, 358, 322, 385, 'r'], [610, 373, 433, 358, 482, 'r'], [628, 409, 433, 409, 470, 'g'], [649, 358, 410, 358, 410, 'g'], [667, 346, 373, 310, 373, 'g'], [688, 262, 334, 262, 334, 'g'], [706, 106, 262, 58, 262, 'g'], [727, 106, 118, 58, 142, 'r'], [748, 106, 118, 82, 154, 'g'], [766, 82, 106, 82, 106, 'g'], [787, 94, 106, 82, 118, 'r'], [805, 118, 130, 106, 154, 'r'], [826, 118, 130, 118, 178, 'g'], [844, 118, 178, 106, 178, 'r'], [865, 154, 178, 130, 190, 'g'], [883, 154, 154, 130, 154, 'd'], [904, 142, 154, 130, 167, 'g'], [922, 130, 130, 118, 167, 'd'], [943, 142, 250, 130, 262, 'r'], [961, 178, 238, 178, 298, 'g'], [1003, 130, 178, 118, 190, 'g'], [1021, 142, 154, 130, 154, 'r'], [1042, 154, 178, 130, 178, 'r'], [1060, 178, 190, 178, 214, 'r'], [1081, 142, 190, 130, 190, 'g'], [1099, 142, 154, 142, 178, 'g'], [1120, 130, 154, 130, 167, 'r'], [1138, 142, 154, 130, 167, 'g'], [1159, 142, 167, 142, 178, 'r'], [1177, 142, 178, 142, 202, 'g'], [1198, 118, 142, 106, 142, 'g'], [1216, 118, 130, 106, 154, 'r'], [1237, 106, 118, 106, 118, 'g'], [1255, 46, 106, 46, 118, 'g'], [1276, 34, 46, 22, 58, 'g']];
        const circles = [[705, 107, 33, '#a8e4e4'], [748, 107, 20, '#d8f0f0'], [532, 130, 28, '#fbdedc'], [805, 130, 16, '#fbdedc'], [571, 322, 37, '#d88c8c'], [610, 433, 40, '#e89c9c'], [667, 347, 31, '#ffffff'], [1003, 130, 18, '#70e0e4'], [962, 178, 25, '#a0d4d4'], [1255, 46, 19, '#58c8d0']];
        const zx = z => 780 + z / 3, zy = z => 230 + z / 3;

        let right = '';
        profile.forEach(([y, len]) => { right += rect(786.5, y + 0.5, len, 2, '#3c3c3c', '#6a6a6a'); });
        right += line(786, 241.500, 1293, 241.500, '#708090');
        right += line(806, 184.500, 1207, 184.500, '#d8b48c', 2) + line(812, 305.500, 1207, 305.500, '#d8b48c', 2);
        right += line(786, 269.500, 1207, 269.500, '#7ab800', 2.500);
        circles.forEach(([x, y, r, c]) => { right += `<circle cx="${zx(x)}" cy="${zy(y)}" r="${r / 3}" fill="${c}"/>`; });
        candles.forEach(([x, t, b, wt, wb, k]) => {
            const cx = Math.round(zx(x)) + 0.5;
            right += line(cx, zy(wt), cx, zy(wb), '#909090');
            if (k === 'd') {
                right += line(cx - 3, zy(t), cx + 3, zy(t), '#909090');
            } else {
                right += rect(cx - 2, Math.round(zy(t)) + 0.5, 4, Math.round((b - t) / 3), k === 'r' ? '#e01010' : '#40d040', '#909090');
            }
        });
        right += line(840.500, 99, 840.500, 526, '#fff', 1, 'stroke-dasharray="3 3"');
        right += line(786, 475.500, 1300, 475.500, '#fff', 1, 'stroke-dasharray="3 3"');
        right += text(1216, 258, '13:56:01', '#b0c4de', 12, 'start', 'font-weight="700"') + text(1233, 272, '01:00', '#b0c4de', 12, 'start', 'font-weight="700"');
        right += line(1288.500, 99, 1288.500, 526, AXIS);
        for (let p = 4232; p >= 4211; p--) {
            const y = Math.round(116 + (4231 - p) * 16.16) + 0.5;
            if (y < 436) {
                right += line(1288, y, 1302, y, AXIS);
                for (let q = 1; q < 4 && y + q * 4 < 435; q++) { right += line(1288, y + q * 4, 1294, y + q * 4, AXIS, 1, 'stroke-opacity="0.6"'); }
                if (p > 4211 && p !== 4223) right += text(1363, y + 4.500, p + '.00', AXIS, 12, 'end');
            }
        }
        right += '<path d="M1294 241l8-8h61v16h-61z" fill="#808080"/>' + text(1362, 245.500, '4223.25', '#fff', 12, 'end', 'font-weight="700"');
        right += wrench(789, 417);
        right += text(811, 429, 'O: 4221.50&#160;&#160;H: 4221.75&#160;&#160;L: 4220.00&#160;&#160;C: 4220.25', AXIS, 12, 'start', 'letter-spacing="0.25"');
        right += rect(785, 435, 503, 1, AXIS) + rect(1289, 435, 77, 1, AXIS);
        right += text(791, 453, 'Volume 3', AXIS, 12);

        const volumes = [[15, 353, 't'], [29, 321, 'r'], [48, 342, 't'], [64, 345, 't'], [82, 353, 'r'], [99, 342, 't'], [118, 321, 't'], [135, 324, 'r'], [152, 327, 'r'], [170, 336, 'r'], [187, 336, 't'], [205, 333, 't'], [222, 348, 'r'], [240, 351, 't'], [257, 336, 'r'], [275, 345, 't'], [292, 354, 'r'], [310, 348, 't'], [326, 351, 'r'], [345, 333, 'r'], [362, 342, 'r'], [380, 342, 'r'], [398, 333, 'r'], [415, 348, 'r'], [433, 321, 't'], [450, 315, 't'], [468, 222, 'r'], [485, 285, 'r'], [503, 162, 'r'], [520, 219, 't'], [538, 120, 'r'], [555, 255, 't'], [573, 276, 't'], [590, 195, 't'], [608, 261, 't'], [624, 177, 't'], [642, 273, 't'], [660, 258, 't'], [678, 327, 't'], [695, 324, 'r'], [712, 312, 'r'], [730, 324, 't'], [747, 333, 'r'], [765, 324, 'r'], [782, 336, 'r'], [800, 339, 't'], [817, 324, 't'], [835, 294, 'r'], [852, 243, 't'], [870, 327, 't'], [888, 291, 't'], [905, 336, 'r'], [923, 336, 'r'], [940, 333, 'r'], [958, 324, 't'], [975, 336, 't'], [992, 345, 'r'], [1010, 336, 't'], [1027, 351, 'r'], [1045, 330, 't'], [1062, 330, 't'], [1080, 345, 'r'], [1097, 345, 't'], [1114, 288, 't'], [1132, 315, 't']];
        volumes.forEach(([z, top, k]) => {
            const y = Math.round(400 + top / 3);
            right += rect(Math.round(780 + z / 2.675), y, 5, 523 - y, k === 'r' ? '#a00000' : '#00b0b0');
        });
        right += rect(1303.5, 467.5, 62, 16, '#808080', '#dde') + text(1362, 480, '1348', '#fff', 12, 'end');
        right += line(1288, 505.500, 1302, 505.500, '#fff');
        right += rect(1303.5, 497.5, 51, 16, '#808080', '#dde') + text(1352, 510, '493', '#fff', 12, 'end');
        right += line(785, 526.500, 1366, 526.500, AXIS) + line(785, 547.500, 1366, 547.500, AXIS);
        right += rect(785, 529.5, 116, 16, '#808080', '#dde') + text(786, 542, '2021.06.07 06:06:03', '#fff', 12);
        right += rect(1083.500, 550.500, 124, 14, 'none', AXIS);
        [['06:09', 849], ['06:51', 938.500], ['07:33', 1029], ['08:15', 1119]].forEach(([s, x]) => { right += text(x, 561, s, AXIS, 11, 'middle'); });
        right += text(1358, 563, '2021.06.07 08:54:02', AXIS, 12, 'end', WIDE);
        right += '<path d="M1202 98h12l-6 7z" fill="#b0c4de"/>';
        document.getElementById('rightChart').innerHTML = right;
    </script>
</body>

</html>
